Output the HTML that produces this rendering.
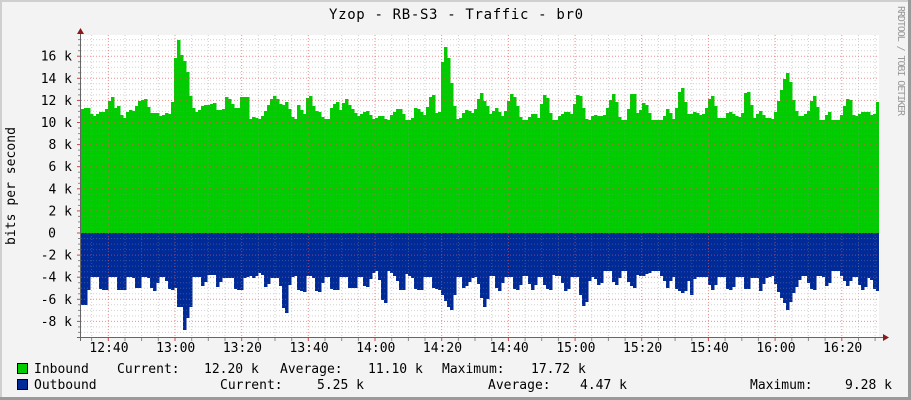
<!DOCTYPE html>
<html><head><meta charset="utf-8"><style>
html,body{margin:0;padding:0;background:#f3f3f3;}
svg{display:block;}
text{font-family:"DejaVu Sans Mono","Liberation Mono",monospace;font-size:13px;fill:#000;}
</style></head><body>
<svg id="s" width="911" height="400" xmlns="http://www.w3.org/2000/svg">
<rect x="0" y="0" width="911" height="400" fill="#f3f3f3"/>
<rect x="0" y="0" width="911" height="2" fill="#cfcfcf"/>
<rect x="0" y="0" width="2" height="400" fill="#cfcfcf"/>
<rect x="908" y="0" width="3" height="400" fill="#9a9a9a"/>
<rect x="0" y="397" width="911" height="3" fill="#9a9a9a"/>
<rect x="81" y="35" width="798" height="302" fill="#ffffff"/>
<g id="data" shape-rendering="crispEdges"></g>
<g id="grid"></g>
<line x1="80.5" y1="33" x2="80.5" y2="341" stroke="#666" stroke-width="1"/>
<line x1="77" y1="337.5" x2="884" y2="337.5" stroke="#666" stroke-width="1"/>
<polygon points="77,34 84,34 80.5,28" fill="#8b1a1a"/>
<polygon points="883,334 883,341 889,337.5" fill="#8b1a1a"/>
<text x="456" y="19" text-anchor="middle" textLength="254" style="font-size:14px">Yzop - RB-S3 - Traffic - br0</text>
<text transform="translate(15,186) rotate(-90)" text-anchor="middle" textLength="118">bits per second</text>
<text transform="translate(898,61) rotate(90)" text-anchor="middle" textLength="110" style="font-size:10px;fill:#999">RRDTOOL / TOBI OETIKER</text>
<g id="yl" text-anchor="end"></g>
<g id="xl" text-anchor="middle"></g>
<rect x="17.5" y="363.5" width="10" height="10" fill="#00cc00" stroke="#000"/>
<rect x="17.5" y="379.5" width="10" height="10" fill="#002a97" stroke="#000"/>
<text x="34" y="373">Inbound</text>
<text x="117" y="373">Current:</text>
<text x="204" y="373">12.20 k</text>
<text x="280" y="373">Average:</text>
<text x="368" y="373">11.10 k</text>
<text x="442" y="373">Maximum:</text>
<text x="531" y="373">17.72 k</text>
<text x="34" y="389">Outbound</text>
<text x="220" y="389">Current:</text>
<text x="317" y="389">5.25 k</text>
<text x="488" y="389">Average:</text>
<text x="580" y="389">4.47 k</text>
<text x="750" y="389">Maximum:</text>
<text x="845" y="389">9.28 k</text>
</svg>
<script>
var NS="http://www.w3.org/2000/svg";
function el(t,a,p){var e=document.createElementNS(NS,t);for(var k in a)e.setAttribute(k,a[k]);p.appendChild(e);return e;}
var inA=[0,240,20,232,30,252,45,260,60,245,75,250,85,220,95,198,102,245,110,225,120,255,135,270,145,238,160,245,180,212,195,205,205,250,230,250,240,260,260,250,275,258,282,140,292,18,300,75,310,95,320,135,330,225,345,245,350,255,365,230,380,225,400,220,405,240,430,240,440,200,460,235,475,235,485,200,500,200,505,270,520,260,535,270,550,255,580,195,590,210,605,235,615,215,625,240,635,265,645,275,655,225,670,270,685,190,700,240,715,245,725,265,750,270,755,230,770,215,775,270,785,225,800,205,805,230,820,245,830,260,850,250,860,240,870,260,880,270,890,265,900,255,915,270,925,270,935,255,955,235,965,250,975,275,995,275,1005,232,1020,245,1035,262,1045,220,1055,190,1065,250,1080,245,1085,115,1095,40,1105,115,1115,200,1125,270,1140,265,1155,240,1170,245,1180,255,1190,225];
var inB=[0,190,10,215,20,230,30,260,45,235,60,255,70,265,85,215,95,190,110,235,120,270,135,275,150,260,160,250,175,270,185,220,195,190,210,265,225,275,240,255,260,245,275,255,285,215,295,190,310,250,320,285,340,255,360,260,375,255,385,225,400,190,410,240,420,295,440,290,450,195,460,190,470,265,490,220,500,230,510,275,535,275,545,295,560,230,575,270,585,265,595,195,605,170,615,235,625,265,640,245,660,255,675,250,685,215,695,195,710,265,735,265,745,245,760,255,775,260,785,270,795,190,805,185,815,265,825,265,840,240,850,265,870,265,880,270,895,215,910,160,920,120,930,170,940,235,955,260,975,255,985,245,1000,195,1015,265,1025,290,1035,265,1045,245,1055,335,1065,335,1075,325,1085,250,1095,225,1105,200,1115,255,1130,260,1145,245,1160,245,1175,260,1185,250,1195,205];
var outA=[0,790,10,835,20,790,25,740,55,740,60,775,75,780,80,740,108,740,112,780,130,780,132,740,160,740,163,770,175,775,178,740,205,740,210,770,225,785,230,740,258,740,262,775,280,780,290,745,292,830,305,830,310,860,315,915,320,830,330,830,332,740,360,740,365,775,380,735,405,735,410,780,420,745,460,745,465,775,480,780,485,745,510,735,515,745,545,720,555,775,570,745,600,745,605,825,620,850,625,745,650,735,655,780,670,785,675,735,700,740,705,780,720,785,725,740,750,740,755,780,770,780,775,740,800,740,805,775,825,775,830,740,850,740,855,780,870,740,880,720,895,720,905,805,915,825,920,720,935,730,950,745,960,780,970,780,975,730,1000,745,1005,775,1020,780,1025,740,1055,740,1060,775,1075,780,1080,740,1085,790,1100,820,1110,840,1120,790,1125,740,1145,740,1150,775,1160,760,1175,740,1190,740];
var outB=[0,780,10,835,20,800,25,740,45,735,50,780,60,785,65,740,95,740,100,775,115,780,120,740,145,735,150,775,160,780,165,740,190,740,195,775,210,780,215,735,245,740,250,775,260,785,265,740,295,740,300,790,310,830,320,800,325,740,345,740,350,765,360,760,365,720,395,720,400,755,410,765,420,715,440,710,445,755,460,775,465,730,480,740,500,730,530,715,540,710,545,740,555,755,560,785,570,740,585,740,590,780,610,790,625,740,630,795,640,740,685,740,690,775,700,780,705,740,735,740,740,775,755,780,760,740,790,740,795,775,805,780,810,745,835,745,840,790,850,745,880,735,890,775,900,795,915,820,920,855,930,800,945,770,960,735,980,740,990,775,1000,780,1005,735,1030,740,1040,770,1050,745,1060,665,1070,680,1080,720,1085,740,1100,765,1105,770,1110,725,1120,740,1135,740,1140,775,1150,780,1160,740,1175,750,1180,775,1195,785];
function pts(a,off){var r=[];for(var i=0;i<a.length;i+=2){r.push([off+a[i]/3,30+a[i+1]/3]);}return r;}
var Z=233;
function interp(p,x){if(x<=p[0][0])return p[0][1];for(var i=1;i<p.length;i++){if(p[i][0]>=x){var a=p[i-1],b=p[i];if(b[0]==a[0])return b[1];return a[1]+(b[1]-a[1])*(x-a[0])/(b[0]-a[0]);}}return p[p.length-1][1];}
var pi=pts(inA,80).concat(pts(inB,480));
var po=pts(outA,80).concat(pts(outB,480));
var D=document.getElementById("data");
el("rect",{x:81,y:120,width:798,height:113,fill:"#00cc00"},D);
el("rect",{x:81,y:233,width:798,height:38,fill:"#002a97"},D);
for(var x=81;x<879;x+=3){
 var w=Math.min(3.6,879-x);
 var vi=Math.round(Math.min(interp(pi,x),interp(pi,x+1.5)));
 var vo=Math.round(Math.max(interp(po,x),interp(po,x+1.5)));
 el("rect",{x:x,y:vi,width:w,height:Z-vi,fill:"#00cc00"},D);
 el("rect",{x:x,y:Z,width:w,height:vo-Z,fill:"#002a97"},D);
}
var g=document.getElementById("grid");
var u=22.1/4;
for(var i=-18;i<=36;i++){var y=Z-i*u;if(y<35||y>337)continue;var maj=(i%4==0);
el("line",{x1:81,x2:879,y1:y.toFixed(1),y2:y.toFixed(1),stroke:maj?"rgba(230,80,80,0.65)":"rgba(140,140,140,0.4)","stroke-width":1,"stroke-dasharray":"1,2"},g);
el("line",{x1:maj?77:78,x2:81,y1:y.toFixed(1),y2:y.toFixed(1),stroke:maj?"#c44":"#888","stroke-width":1},g);
}
for(var k=-1;k<60;k++){var x=108.3+k*16.67;if(x<82||x>879)continue;var maj=((k%4)+4)%4==0;
el("line",{x1:x.toFixed(1),x2:x.toFixed(1),y1:35,y2:337,stroke:maj?"rgba(230,80,80,0.65)":"rgba(140,140,140,0.4)","stroke-width":1,"stroke-dasharray":"1,2"},g);
el("line",{x1:x.toFixed(1),x2:x.toFixed(1),y1:337,y2:341,stroke:maj?"#c44":"#888","stroke-width":1},g);
}
var yl=document.getElementById("yl");
var labs=["16 k","14 k","12 k","10 k","8 k","6 k","4 k","2 k","0","-2 k","-4 k","-6 k","-8 k"];
for(var j=0;j<labs.length;j++){var v=8-j;var y=Z-v*4*u+4.5;var t=el("text",{x:(labs[j]=="0"?56:72),y:y.toFixed(1)},yl);t.textContent=labs[j];}
var xl=document.getElementById("xl");
var tl=["12:40","13:00","13:20","13:40","14:00","14:20","14:40","15:00","15:20","15:40","16:00","16:20"];
for(var j=0;j<tl.length;j++){var t=el("text",{x:(109+j*66.7).toFixed(1),y:352},xl);t.textContent=tl[j];}
</script>
</body></html>
